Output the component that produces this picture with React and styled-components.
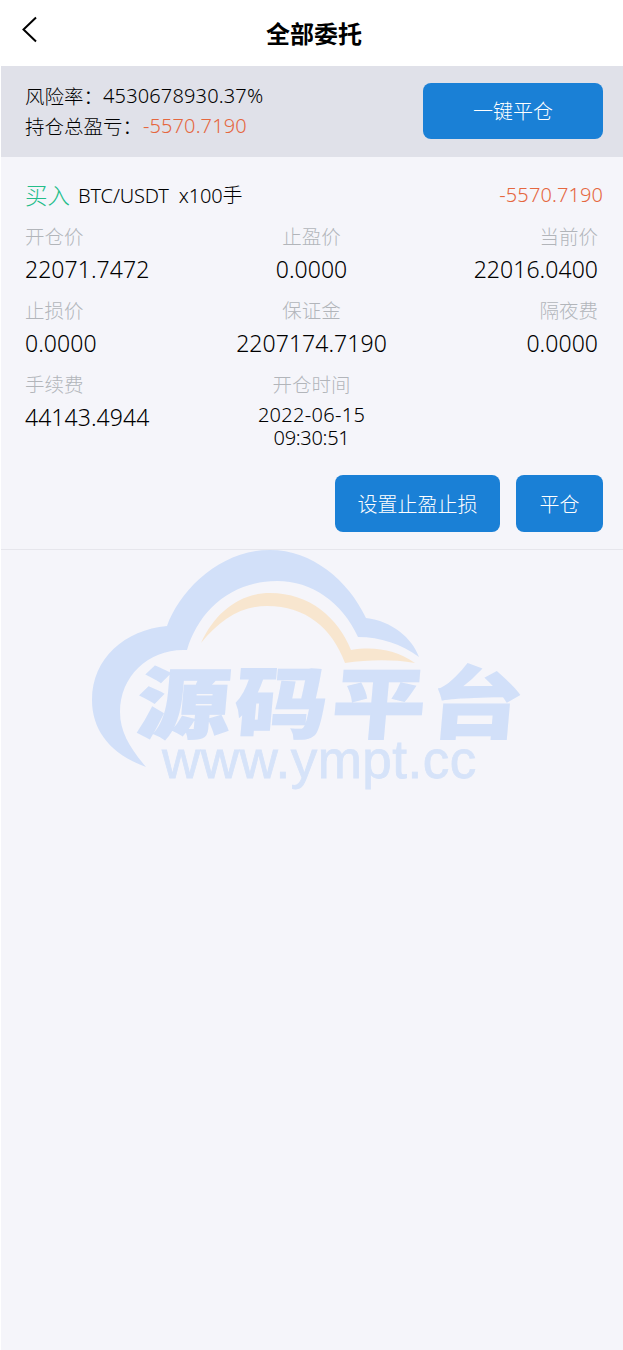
import React from "react";
import styled, { createGlobalStyle } from "styled-components";

const GlobalStyle = createGlobalStyle`
  html, body {
    margin: 0;
    padding: 0;
    background: #fff;
  }
  body {
    font-family: "Noto Sans", "Noto Sans CJK SC", sans-serif;
    font-weight: 300;
    color: #000;
  }
`;

const Page = styled.div`
  position: relative;
  width: 623px;
  height: 1350px;
  overflow: hidden;
  padding-left: 1px;
  box-sizing: border-box;
`;

const Header = styled.header`
  position: relative;
  height: 66px;
  display: flex;
  align-items: center;
  justify-content: center;
  background: #fff;
`;

const BackButton = styled.button`
  position: absolute;
  left: 18px;
  top: 14px;
  width: 20px;
  height: 32px;
  padding: 0;
  border: 0;
  background: none;
  line-height: 0;
`;

const Title = styled.h1`
  margin: 0 0 0 4px;
  font-size: 24px;
  line-height: 32px;
  font-weight: 700;
  font-family: "Noto Sans CJK SC", sans-serif;
`;

const Body = styled.main`
  min-height: 1284px;
  background: #f5f5fa;
`;

const Summary = styled.section`
  height: 91px;
  box-sizing: border-box;
  padding: 0 20px 2px 24px;
  display: flex;
  align-items: center;
  justify-content: space-between;
  background: #e0e1e9;
`;

const SummaryLines = styled.div`
  font-size: 20px;
  line-height: 30px;
  letter-spacing: 0.15px;
`;

const Line = styled.div`
  display: flex;
  white-space: nowrap;
`;

const Label = styled.span`
  font-family: "Noto Sans CJK SC", sans-serif;
  font-size: 19.5px;
  letter-spacing: 0;
  margin-right: ${(p) => p.$gap || 0}px;
`;

const Loss = styled.span`
  color: #e5673f;
  font-size: 20px;
  letter-spacing: 0.1px;
`;

const Button = styled.button`
  height: ${(p) => p.$h}px;
  width: ${(p) => p.$w}px;
  padding: 0;
  border: 0;
  border-radius: 8px;
  background: #1a80d6;
  color: #fff;
  font-family: "Noto Sans CJK SC", sans-serif;
  font-weight: 300;
  font-size: 20px;
`;

const Order = styled.section`
  padding: 22px 20px 17px 24px;
  border-bottom: 1px solid #e6e6ec;
`;

const OrderHead = styled.div`
  display: flex;
  justify-content: space-between;
  align-items: center;
  height: 30px;
`;

const Side = styled.div`
  display: flex;
  align-items: center;
`;

const Buy = styled.span`
  color: #24bd8a;
  font-family: "Noto Sans CJK SC", sans-serif;
  font-size: 22.5px;
  margin-right: 8px;
`;

const Pair = styled.span`
  font-size: 20px;
  letter-spacing: -0.15px;
  white-space: pre;
`;

const Grid = styled.div`
  display: grid;
  grid-template-columns: 1fr 1fr 1fr;
  padding-right: 5px;
  margin-top: 13px;
  row-gap: 8px;
`;

const Cell = styled.div`
  text-align: ${(p) => p.$align};
`;

const CellLabel = styled.div`
  font-family: "Noto Sans CJK SC", sans-serif;
  font-size: 19.5px;
  line-height: 28px;
  color: #b2b5ba;
`;

const CellValue = styled.div`
  font-size: 23px;
  line-height: 38px;
  letter-spacing: 0.05px;
`;

const CellTime = styled.div`
  font-size: 20px;
  line-height: 23px;
  padding-top: 5px;
`;

const TimeLine = styled.div`
  letter-spacing: ${(p) => p.$spacing}px;
`;

const Actions = styled.div`
  display: flex;
  justify-content: flex-end;
  gap: 16px;
  margin-top: 26px;
`;

const Watermark = styled.svg`
  position: absolute;
  left: 80px;
  top: 540px;
  width: 460px;
  height: 260px;
  pointer-events: none;
`;

const cells = [
  ["开仓价", "22071.7472", "left"],
  ["止盈价", "0.0000", "center"],
  ["当前价", "22016.0400", "right"],
  ["止损价", "0.0000", "left"],
  ["保证金", "2207174.7190", "center"],
  ["隔夜费", "0.0000", "right"],
  ["手续费", "44143.4944", "left"],
];

export default function App() {
  return (
    <Page>
      <GlobalStyle />
      <Header>
        <BackButton aria-label="back">
          <svg width="20" height="32" viewBox="0 0 20 32" fill="none">
            <path d="M17 3.5 4.5 15.5 17 27.5" stroke="#000" strokeWidth="2" />
          </svg>
        </BackButton>
        <Title>全部委托</Title>
      </Header>
      <Body>
        <Summary>
          <SummaryLines>
            <Line>
              <Label>风险率：</Label>
              <span>4530678930.37%</span>
            </Line>
            <Line>
              <Label $gap={1}>持仓总盈亏：</Label>
              <Loss>-5570.7190</Loss>
            </Line>
          </SummaryLines>
          <Button $w={180} $h={56}>一键平仓</Button>
        </Summary>
        <Order>
          <OrderHead>
            <Side>
              <Buy>买入</Buy>
              <Pair>BTC/USDT  x100手</Pair>
            </Side>
            <Loss>-5570.7190</Loss>
          </OrderHead>
          <Grid>
            {cells.map(([label, value, align]) => (
              <Cell key={label} $align={align}>
                <CellLabel>{label}</CellLabel>
                <CellValue>{value}</CellValue>
              </Cell>
            ))}
            <Cell $align="center">
              <CellLabel>开仓时间</CellLabel>
              <CellTime>
                <TimeLine $spacing={0.3}>2022-06-15</TimeLine>
                <TimeLine $spacing={-0.3}>09:30:51</TimeLine>
              </CellTime>
            </Cell>
          </Grid>
          <Actions>
            <Button $w={165} $h={57}>设置止盈止损</Button>
            <Button $w={87} $h={57}>平仓</Button>
          </Actions>
        </Order>
      </Body>
      <Watermark viewBox="0 0 460 260">
        <path
          fill="#d2e0f9"
          d="M66 227C30 214 12 190 12 160C12 118 45 90 87 86C100 50 140 10 190 10C232 10 268 40 286 78C312 81 332 98 339 117C322 104 300 97 278 97C262 62 232 41 197 41C150 41 118 72 107 110C70 108 40 135 40 172C40 192 50 208 66 227Z"
        />
        <path
          fill="#f8e6cf"
          d="M121 103C135 72 160 53 190 53C230 53 258 78 271 110C295 106 316 110 335 123C310 119 288 120 265 123C252 88 226 66 187 66C160 66 140 80 121 103Z"
        />
        <text
          fontFamily="'Noto Sans CJK SC', sans-serif"
          fontWeight="900"
          fontSize="88"
          letterSpacing="4"
          fill="#d2e0f9"
          stroke="#d2e0f9"
          strokeWidth="1.5"
          transform="translate(55 192) skewX(-5) scale(1.06 0.88)"
        >
          源码平台
        </text>
        <text
          x="82"
          y="238"
          fontFamily="'Liberation Sans', sans-serif"
          fontWeight="400"
          fontSize="53"
          letterSpacing="0.5"
          fill="#d6e3f9"
          stroke="#d6e3f9"
          strokeWidth="0.8"
        >
          www.ympt.cc
        </text>
      </Watermark>
    </Page>
  );
}
